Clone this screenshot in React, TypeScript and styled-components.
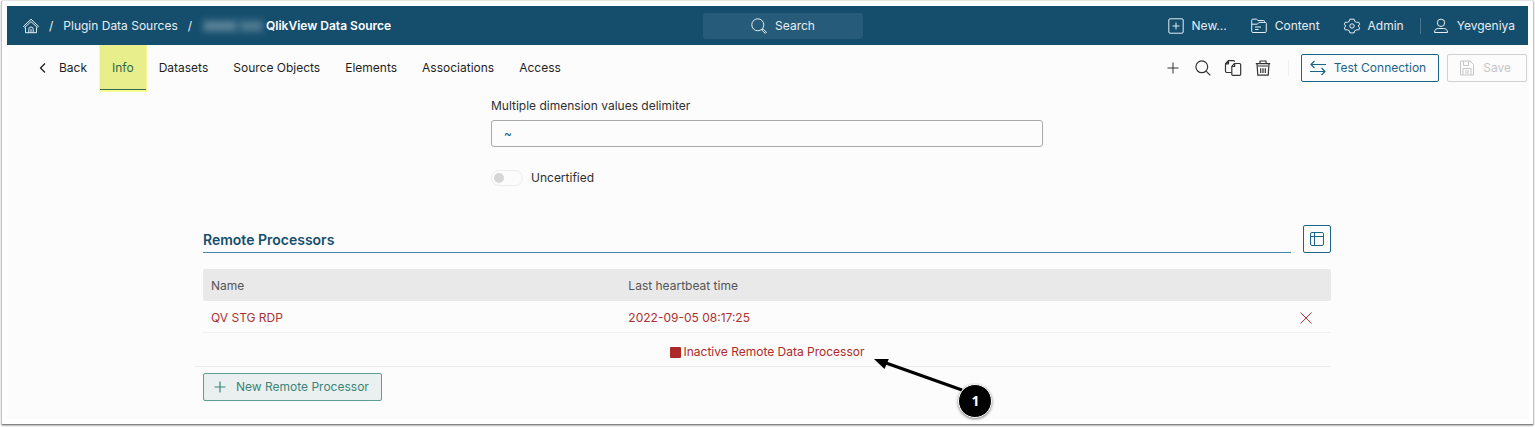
import React from "react";
import styled, { createGlobalStyle, css } from "styled-components";

const GlobalStyle = createGlobalStyle`
  *, *::before, *::after { box-sizing: border-box; }
  body {
    margin: 0;
    background: #ffffff;
    color: #2f2f2f;
    font: 400 12px/16px Inter, "Liberation Sans", sans-serif;
  }
  button, input { font: inherit; color: inherit; }
  button { cursor: pointer; }
  a { color: inherit; text-decoration: none; }
`;

const Frame = styled.div`
  margin: 0 1px 2px;
  padding: 5px 5px 5px;
  background: #ffffff;
  border: 1px solid #c4c4c4;
  border-top-color: #e4e4e4;
  border-bottom-color: #858585;
  border-radius: 2px;
  box-shadow: 0 1px 2px rgba(0, 0, 0, 0.3);
`;

const Screen = styled.div`
  background: #fcfcfc;
`;

const TopBar = styled.header`
  display: flex;
  align-items: center;
  height: 39px;
  padding: 0 13px 0 16px;
  background: #154e6d;
  color: #e6edf1;
`;

const Breadcrumbs = styled.nav`
  flex: 1 1 0;
  display: flex;
  align-items: center;
  gap: 10px;
  white-space: nowrap;
`;

const HomeLink = styled.a`
  display: flex;
`;

const CurrentPage = styled.span`
  display: flex;
  align-items: center;
  gap: 2px;
  color: #ffffff;
  font-weight: 600;
`;

const Redacted = styled.span`
  display: flex;
  gap: 5px;
  width: 62px;
  height: 16px;
  padding: 4px 2px;
  background: rgba(255, 255, 255, 0.08);
  filter: blur(3px);

  &::before,
  &::after {
    content: "";
    flex: 3;
    background: rgba(255, 255, 255, 0.26);
  }
  &::after { flex: 2; background: rgba(255, 255, 255, 0.2); }
`;

const SearchButton = styled.button`
  display: flex;
  align-items: center;
  justify-content: center;
  gap: 8px;
  width: 160px;
  height: 26px;
  margin: 0 0 0 28px;
  padding: 0;
  border: 0;
  border-radius: 3px;
  background: #265b79;
`;

const UserNav = styled.nav`
  flex: 1 1 0;
  display: flex;
  align-items: center;
  justify-content: flex-end;
  gap: 24px;
  white-space: nowrap;
`;

const NavLink = styled.a<{ $divided?: boolean }>`
  display: flex;
  align-items: center;
  gap: 8px;
  ${(p) =>
    p.$divided &&
    css`
      margin-left: -8px;
      padding-left: 12px;
      border-left: 1px solid #4a748b;
    `}
`;

const SubBar = styled.div`
  display: flex;
  align-items: center;
  justify-content: space-between;
  height: 46px;
  padding: 0 1px 0 28px;
`;

const Tabs = styled.nav`
  display: flex;
  align-self: flex-start;
  gap: 1px;
  height: 45px;
`;

const Tab = styled.a<{ $active?: boolean }>`
  display: flex;
  align-items: center;
  gap: 8px;
  padding: 2px 12px 0;
  border-bottom: 1px solid transparent;
  color: #1f1f1f;
  ${(p) =>
    p.$active &&
    css`
      background: #e8ee8b;
      border-bottom-color: #2b6a4b;
      box-shadow: 0 1px 0 1px #fbfb93;
      color: #2b6a4b;
    `}
`;

const BackTab = styled(Tab)`
  padding-left: 0;
`;

const Tools = styled.div`
  display: flex;
  align-items: center;
  gap: 8px;
`;

const IconGroup = styled.div`
  display: flex;
  align-items: center;
  gap: 14px;
  height: 16px;
  margin-right: 4px;
  padding-right: 17px;
  border-right: 1px solid #eeeeee;
`;

const IconButton = styled.button`
  display: flex;
  padding: 0;
  border: 0;
  background: none;
  color: #333333;
`;

type Tone = "blue" | "green" | "disabled";

const tones = {
  blue: { line: "#1c6486", text: "#1c6486", fill: "#fcfcfc" },
  green: { line: "#5d9f93", text: "#3a8578", fill: "#eaf0f0" },
  disabled: { line: "#d0d0d0", text: "#c6c6c6", fill: "#fcfcfc" },
};

const Button = styled.button<{ $tone: Tone; $square?: boolean }>`
  display: flex;
  align-items: center;
  justify-content: center;
  gap: 8px;
  flex: none;
  height: 28px;
  padding: ${(p) => (p.$square ? "0" : "0 12px 0 8px")};
  width: ${(p) => (p.$square ? "28px" : "auto")};
  border: 1px solid ${(p) => tones[p.$tone].line};
  border-radius: 2px;
  background: ${(p) => tones[p.$tone].fill};
  color: ${(p) => tones[p.$tone].text};
  white-space: nowrap;
`;

const SaveButton = styled(Button)`
  padding: 0 15px 0 11px;
`;

const Content = styled.main`
  width: 100%;
  max-width: 1129px;
  margin: 0 auto;
  padding: 7px 1px 18px 0;
`;

const Form = styled.form`
  display: flex;
  flex-direction: column;
  width: 100%;
  max-width: 552px;
  margin: 0 auto 39px;
`;

const TextInput = styled.input`
  height: 27px;
  margin: 6px 0 23px;
  padding: 0 12px;
  border: 1px solid #a9a9a9;
  border-radius: 3px;
  background: #fcfcfc;
  color: #1c6486;
`;

const ToggleLabel = styled.label`
  display: flex;
  align-items: center;
  align-self: flex-start;
  gap: 8px;
`;

const Toggle = styled.input`
  appearance: none;
  display: flex;
  align-items: center;
  width: 32px;
  height: 16px;
  margin: 0;
  padding: 0 2px;
  border: 1px solid #ededed;
  border-radius: 8px;

  &::before {
    content: "";
    width: 10px;
    height: 10px;
    border-radius: 50%;
    background: #d6d6d6;
  }
  &:checked { justify-content: flex-end; }
`;

const SectionHead = styled.div`
  display: flex;
  gap: 12px;
  height: 28px;
  margin-bottom: 16px;
`;

const SectionTitle = styled.h2`
  flex: 1;
  margin: 0;
  padding-top: 5px;
  border-bottom: 1px solid #4388a8;
  color: #154e6d;
  font-size: 14px;
  font-weight: 600;
  line-height: 20px;
`;

const Table = styled.table`
  width: 100%;
  table-layout: fixed;
  border-collapse: separate;
  border-spacing: 0;
  text-align: left;
`;

const HeadCell = styled.th`
  height: 32px;
  padding: 2px 8px 0;
  background: #e9e9e9;
  color: #555555;
  font-weight: 400;

  &:first-child { width: 37%; border-radius: 2px 0 0 2px; }
  &:last-child { width: 60px; border-radius: 0 2px 2px 0; }
`;

const Cell = styled.td`
  height: 32px;
  padding: 2px 8px 0;
  border-bottom: 1px solid #f0f0f0;
  color: #ad3232;
`;

const RemoveButton = styled(IconButton)`
  margin: 0 9px 0 auto;
  color: #b93b3b;
`;

const LegendRow = styled.div`
  display: flex;
  justify-content: center;
  margin: 0 0 6px -8px;
  padding: 11px 0 6px 8px;
  border-bottom: 1px solid #ebebeb;
`;

const Legend = styled.div`
  position: relative;
  display: flex;
  align-items: center;
  gap: 3px;
  color: #b02a2a;
`;

const Swatch = styled.span`
  width: 11px;
  height: 11px;
  border-radius: 1px;
  background: #ad2828;
`;

const Callout = styled.div`
  position: absolute;
  top: 15px;
  left: calc(100% + 10px);
  width: 120px;
  height: 61px;
`;

const CalloutArrow = styled.svg`
  display: block;
`;

const CalloutBadge = styled.span`
  position: absolute;
  top: 25px;
  left: 84px;
  width: 34px;
  height: 34px;
  border: 1px solid #ffffff;
  border-radius: 50%;
  background: #000000;
  box-shadow: 0 1px 3px rgba(0, 0, 0, 0.5);
  color: #ffffff;
  font: 700 14px/32px "Open Sans", sans-serif;
  text-align: center;
`;

const icons = {
  home: (
    <>
      <path d="M.5 8.300 8 1.200l7.500 7.100-1.100 1.200L8 3.600 1.600 9.500z" />
      <path d="M2.500 9.500v5.200h11V9.500M5.800 14.500v-3.300a2.200 2.200 0 0 1 4.400 0v3.300M8 11v3.500" />
    </>
  ),
  search: (
    <>
      <circle cx="6.8" cy="6.8" r="5.9" />
      <path d="m11.1 11.1 4.2 4.2" />
    </>
  ),
  searchHeavy: (
    <>
      <circle cx="6.8" cy="6.8" r="6" />
      <path d="m11.2 11.2.9-.2 3.3 3.2-1.2 1.2-3.2-3.3z" />
    </>
  ),
  newItem: (
    <>
      <rect x=".8" y=".8" width="14.4" height="14.4" rx="1.2" />
      <path d="M8 4.5v7M4.5 8h7" />
    </>
  ),
  folder: (
    <>
      <path d="M13.500 4.200V3.500q0-1-1-1H7L5.600 1.200H1.700q-1 0-1 1v11.100q0 1.200 1.200 1.200h12.200q1.200 0 1.200-1.200V5.400q0-1-1-1H8L6.300 6.200H.7" />
      <path d="M4 9h6M4 11.500h3.500" />
    </>
  ),
  gear: (
    <>
      <path d="M5.900 1.200h4.200l.7 2.200 1.700.9 2.200-.1 1 2-1.500 1.800 1.500 1.900-1 2.100-2.300-.2-1.600.9-.7 2.200H5.900l-.7-2.200-1.600-.9-2.300.2-1-2.100L1.800 8 .3 6.200l1-2 2.200.1 1.700-.9z" />
      <circle cx="8" cy="8" r="2.200" />
    </>
  ),
  user: (
    <>
      <circle cx="8" cy="4.800" r="3.700" />
      <path d="M1.500 14.500c0-3 1.700-4 4-4h5c2.300 0 4 1 4 4z" />
    </>
  ),
  chevron: <path d="M10 3.500 5.500 8l4.500 4.500" />,
  plus: <path d="M8 2.500v11M2.500 8h11" />,
  copy: (
    <>
      <path d="M9.500 3.500h5q1.200 0 1.200 1.200v9.500q0 1.200-1.200 1.200H8q-1.200 0-1.200-1.200V6.300zM9.700 3.500v3H6.800" />
      <path d="M6.500 12.500H1.700q-1.200 0-1.200-1.200V3.600L3.400.6h5q1.200 0 1.200 1.200M3.500.6v3.200H.5L3.500.6" />
    </>
  ),
  trash: (
    <>
      <path d="M.8 3.700h14.400M5 3.500V1h6v2.500M2 3.700l.8 11.500h10.400L14 3.700M3 6h10" />
      <path d="M5.700 8.200v4.800M8 8.200v4.800M10.300 8.200v4.800" />
    </>
  ),
  swap: <path d="M16 4.500H1M4.500 1 1 4.500 4.500 8M0 11.500h15M11.500 8l3.500 3.500-3.500 3.500" />,
  save: (
    <>
      <path d="M1.500 1h9.500l3.500 3.500v10.500h-13z" />
      <path d="M4 15V8.500h8V15M4.500 1v4.500h5V1M6 11h4M6 13h4" />
    </>
  ),
  table: (
    <>
      <rect x="1.500" y="1.500" width="13" height="13" rx="1.500" />
      <path d="M1.500 5.500h13M5.500 1.500v13" />
    </>
  ),
  close: <path d="m2.500 2.500 11 11M13.500 2.500l-11 11" />,
};

function Icon({ name, weight = 1 }: { name: keyof typeof icons; weight?: number }) {
  return (
    <svg
      width="16"
      height="16"
      viewBox="0 0 16 16"
      fill="none"
      stroke="currentColor"
      strokeWidth={weight}
      strokeLinejoin="round"
      overflow="visible"
      aria-hidden="true"
    >
      {icons[name]}
    </svg>
  );
}

const tabs = ["Info", "Datasets", "Source Objects", "Elements", "Associations", "Access"];

export default function App() {
  return (
    <>
      <GlobalStyle />
      <Frame>
        <Screen>
          <TopBar>
            <Breadcrumbs aria-label="Breadcrumb">
              <HomeLink href="#" aria-label="Home">
                <Icon name="home" />
              </HomeLink>
              <span>/</span>
              <a href="#">Plugin Data Sources</a>
              <span>/</span>
              <CurrentPage>
                <Redacted />
                QlikView Data Source
              </CurrentPage>
            </Breadcrumbs>
            <SearchButton type="button">
              <Icon name="searchHeavy" />
              Search
            </SearchButton>
            <UserNav aria-label="Account">
              <NavLink href="#"><Icon name="newItem" />New...</NavLink>
              <NavLink href="#"><Icon name="folder" />Content</NavLink>
              <NavLink href="#"><Icon name="gear" />Admin</NavLink>
              <NavLink href="#" $divided><Icon name="user" />Yevgeniya</NavLink>
            </UserNav>
          </TopBar>

          <SubBar>
            <Tabs aria-label="Data source">
              <BackTab href="#"><Icon name="chevron" weight={1.3} />Back</BackTab>
              {tabs.map((tab) => (
                <Tab key={tab} href="#" $active={tab === "Info"}>{tab}</Tab>
              ))}
            </Tabs>
            <Tools>
              <IconGroup>
                <IconButton type="button" aria-label="Add"><Icon name="plus" /></IconButton>
                <IconButton type="button" aria-label="Search"><Icon name="search" weight={1.2} /></IconButton>
                <IconButton type="button" aria-label="Copy"><Icon name="copy" weight={1.2} /></IconButton>
                <IconButton type="button" aria-label="Delete"><Icon name="trash" weight={1.2} /></IconButton>
              </IconGroup>
              <Button type="button" $tone="blue">
                <Icon name="swap" weight={1.2} />
                Test Connection
              </Button>
              <SaveButton type="button" $tone="disabled" disabled>
                <Icon name="save" />
                Save
              </SaveButton>
            </Tools>
          </SubBar>

          <Content>
            <Form>
              <label htmlFor="delimiter">Multiple dimension values delimiter</label>
              <TextInput id="delimiter" type="text" defaultValue="~" />
              <ToggleLabel>
                <Toggle type="checkbox" />
                Uncertified
              </ToggleLabel>
            </Form>

            <SectionHead>
              <SectionTitle>Remote Processors</SectionTitle>
              <Button type="button" $tone="blue" $square aria-label="Table settings">
                <Icon name="table" />
              </Button>
            </SectionHead>

            <Table>
              <thead>
                <tr>
                  <HeadCell>Name</HeadCell>
                  <HeadCell>Last heartbeat time</HeadCell>
                  <HeadCell aria-label="Actions" />
                </tr>
              </thead>
              <tbody>
                <tr>
                  <Cell>QV STG RDP</Cell>
                  <Cell>2022-09-05 08:17:25</Cell>
                  <Cell>
                    <RemoveButton type="button" aria-label="Remove">
                      <Icon name="close" />
                    </RemoveButton>
                  </Cell>
                </tr>
              </tbody>
            </Table>

            <LegendRow>
              <Legend>
                <Swatch />
                Inactive Remote Data Processor
                <Callout>
                  <CalloutArrow width="120" height="61" viewBox="0 0 120 61" aria-hidden="true">
                    <path d="M12 4 88 31" stroke="#000000" strokeWidth="3" />
                    <path d="M0 0 15 -.5 10.5 10z" fill="#000000" />
                  </CalloutArrow>
                  <CalloutBadge>1</CalloutBadge>
                </Callout>
              </Legend>
            </LegendRow>

            <Button type="button" $tone="green">
              <Icon name="plus" weight={1.2} />
              New Remote Processor
            </Button>
          </Content>
        </Screen>
      </Frame>
    </>
  );
}
